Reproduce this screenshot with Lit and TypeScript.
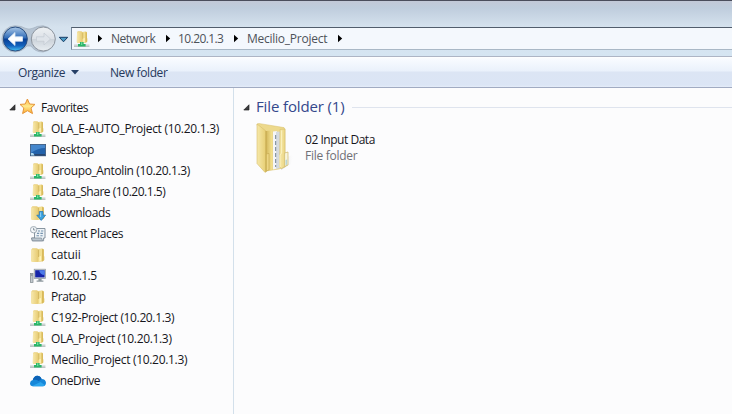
import { LitElement, html, svg, css } from "lit";
import { customElement, property } from "lit/decorators.js";
import { styleMap } from "lit/directives/style-map.js";

type Icon = "netfolder" | "desktop" | "downloads" | "recent" | "folder" | "computer" | "cloud";

const folderShape = svg`
  <path d="M1.4 2.4 L2.4 1.2 H7 L8 2 L12.6 1.4 L13.8 2.4 V9 L14.4 9.6 V13 L12.6 14.6 L2.2 15 L1.2 14 Z" fill="#e9d07f"/>
  <path d="M1.4 2.4 L8.4 2.2 V14.8 L2.2 15 L1.2 14 Z" fill="url(#gold)"/>
  <path d="M8.4 2.4 L12 1.8 V13.6 L8.4 14.8 Z" fill="#f3df90"/>
  <path d="M8.6 3 V10" stroke="#c9ac55" stroke-width=".8"/>
  <path d="M12 2 L13.8 2.6 V13.4 L12 14.4 Z" fill="#d8b95a"/>
  <path d="M9.4 9.5 L11 9 V13.6 L9.4 14.2 Z" fill="#fff3bb"/>`;

const art = {
  folder: folderShape,
  netfolder: svg`
    <g transform="translate(1.9 -.8) scale(.8 .86)">${folderShape}</g>
    <path d="M0 13.4 H15.4 V15.6 H0 Z" fill="#cfd6d6"/>
    <path d="M0 15.4 H15.4" stroke="#9aa7a4" stroke-width=".6"/>
    <path d="M6 11 H9.6 V13 H11.6 V15.6 H4 V13 H6 Z" fill="#2bb569"/>
    <path d="M7 11.2 H8.3 V14 H7 Z" fill="#6fdb98"/>`,
  desktop: svg`
    <rect x=".4" y="2.4" width="15.2" height="11.4" fill="#2362ab" stroke="#3b587c" stroke-width=".8"/>
    <path d="M1 3 H15 V6 Q8 6 1 11 Z" fill="#4586cc"/>
    <path d="M1 12.2 H15 V13.6 H1 Z" fill="#2b4365"/>
    <path d="M1 11 H3.2 L4.6 13.4 H1 Z" fill="#a9d5ef"/>`,
  downloads: svg`${folderShape}
    <path d="M9.4 6.5 H13 V10.2 H15.6 L11.2 15.4 L6.8 10.2 H9.4 Z" fill="#3ba2df" stroke="#2b7ab8" stroke-width=".8"/>
    <path d="M10.6 7.4 V12" stroke="#8ed1f4" fill="none"/>`,
  recent: svg`
    <path d="M4.5 2.5 H15 V12 H13.6 V14.8 H2.2 L1.8 12 H4.5 Z" fill="#edf2f6" stroke="#7c8995" stroke-width=".9"/>
    <path d="M1.4 12 H11.5 L12.6 14.8 H2.6 Z" fill="#bcc7d0" stroke="#7c8995" stroke-width=".7"/>
    <path d="M8 5 H10 M11 5 H13.3 M7 7.4 H9.2 M10.4 7.4 H12.9 M6.4 9.8 H9 M10.4 9.8 H12.6" stroke="#7592ad" stroke-width="1.1"/>
    <circle cx="3.6" cy="3.7" r="3.2" fill="#f4f7f9" stroke="#98a5af" stroke-width=".9"/>
    <path d="M3.6 1.8 V4 H5.3" stroke="#61707c" stroke-width=".7" fill="none"/>`,
  computer: svg`
    <rect x=".4" y="5.4" width="2.6" height="9" fill="#c4cbd0" stroke="#7d858b" stroke-width=".7"/>
    <path d="M1 7 H2.5" stroke="#515b65" stroke-width=".8"/>
    <rect x="4.2" y="1.2" width="11.4" height="9.4" fill="#d5dadd" stroke="#8c969d" stroke-width=".7"/>
    <rect x="5.2" y="2.2" width="9.4" height="7.2" fill="#1625a9"/>
    <path d="M9 2.2 H14.6 V7 Q10 7 9 2.2 Z" fill="#4d7be8"/>
    <path d="M8.4 10.8 H11.6 V12.4 H13.4 V13.8 H6.6 V12.4 H8.4 Z" fill="#8d989e"/>`,
  cloud: svg`
    <path d="M3 13.2 Q0 13 0 10.2 Q.2 7.6 2.8 7.1 Q3.8 3 7.3 2.8 Q10.2 2.8 11.6 5.9 Q15.7 6.2 16 9.7 Q15.8 13 13 13.2 Z" fill="#1687d9"/>
    <path d="M2.8 7.1 Q3.8 3 7.3 2.8 Q10.2 2.8 11.6 5.9 L8.8 8 Q6 6.2 2.8 7.1Z" fill="#0c62b6"/>
    <path d="M2 12.9 L10.6 9 L15 12.2 Q14 13.2 13 13.2 H3 Z" fill="#2ba5ed"/>`,
};

const places: { icon: Icon; label: string; tracking: number }[] = [
  { icon: "netfolder", label: "OLA_E-AUTO_Project (10.20.1.3)", tracking: -0.28 },
  { icon: "desktop", label: "Desktop", tracking: -0.5 },
  { icon: "netfolder", label: "Groupo_Antolin (10.20.1.3)", tracking: -0.38 },
  { icon: "netfolder", label: "Data_Share (10.20.1.5)", tracking: -0.47 },
  { icon: "downloads", label: "Downloads", tracking: -0.36 },
  { icon: "recent", label: "Recent Places", tracking: -0.33 },
  { icon: "folder", label: "catuii", tracking: -0.08 },
  { icon: "computer", label: "10.20.1.5", tracking: -0.57 },
  { icon: "folder", label: "Pratap", tracking: -0.42 },
  { icon: "netfolder", label: "C192-Project (10.20.1.3)", tracking: -0.37 },
  { icon: "netfolder", label: "OLA_Project (10.20.1.3)", tracking: -0.34 },
  { icon: "netfolder", label: "Mecilio_Project (10.20.1.3)", tracking: -0.32 },
  { icon: "cloud", label: "OneDrive", tracking: -0.48 },
];

@customElement("place-icon")
class PlaceIcon extends LitElement {
  static styles = css`
    :host { display: block; width: 16px; height: 16px; flex: none; }
    svg { display: block; }
  `;
  @property() name: Icon = "folder";
  render() {
    return html`<svg width="16" height="16" viewBox="0 0 16 16">
      <defs><linearGradient id="gold"><stop stop-color="#f7e8ac"/><stop offset="1" stop-color="#e6ca70"/></linearGradient></defs>
      ${art[this.name]}</svg>`;
  }
}

@customElement("app-root")
class AppRoot extends LitElement {
  static styles = css`
    :host {
      display: flex; flex-direction: column; width: 732px; height: 414px; overflow: hidden;
      background: #fcfcfd; color: #16161c; white-space: nowrap;
      font: 12px/21px "Open Sans", "Noto Sans", sans-serif; letter-spacing: -0.4px;
    }
    * { box-sizing: border-box; }
    svg { display: block; flex: none; }
    .frame {
      height: 56px; flex: none; display: flex; align-items: flex-start; padding-top: 25px;
      border-top: 1px solid #4b4e5c;
      background: linear-gradient(#c2c9d7, #bfcddd 7px, #d5e2ee 26px, #d5e5f2);
    }
    .nav { margin-top: -1px; }
    .address {
      flex: 1; height: 23px; margin-top: 1px; display: flex; align-items: center; padding-left: 2px;
      background: #f4f8fd; color: #4d5259;
      border: solid #a9b8c6; border-top-color: #515d6c; border-left-color: #77899c; border-width: 1px 0 1px 1px;
    }
    .crumb { flex: none; }
    .network { width: 45px; letter-spacing: -0.5px; }
    .host { width: 46px; letter-spacing: -0.58px; }
    .share { width: 81px; letter-spacing: -0.25px; }
    .tools {
      height: 32px; flex: none; display: flex; align-items: center; padding-left: 18px; color: #26395c;
      border-top: 1px solid #adb5c5; border-bottom: 1px solid #a1abc2;
      background: linear-gradient(#fff, #f8fbff 2px, #eaf1fb 14px, #dce5f4 15px, #dbe5f5 28px, #e5ecf8);
    }
    .caret { margin-left: 6px; }
    .new { margin-left: 31px; }
    .body { flex: 1; display: flex; min-height: 0; }
    .side { width: 234px; padding: 9px 0 0 9px; border-right: 1px solid #d3e0eb; }
    .fav { display: flex; align-items: center; height: 21px; }
    .star { margin: -2px 5px 0 3px; }
    .place { display: flex; align-items: center; height: 21px; padding-left: 21px; gap: 5px; }
    .main { flex: 1; padding: 8px 0 0 9px; }
    .group { display: flex; align-items: center; height: 22px; color: #34488c; font-size: 15px; letter-spacing: -0.13px; }
    .grouptitle { margin: -2px 0 0 6px; }
    .rule { flex: 1; height: 1px; margin-left: 7px; background: #dfe4ee; }
    .file { display: flex; padding: 5px 0 0 10px; }
    .meta { padding-top: 9px; margin-left: 10px; line-height: 16px; letter-spacing: -0.47px; }
    .kind { color: #707076; letter-spacing: -0.28px; }
  `;

  private sep(width: number, at: number) {
    return html`<svg width=${width} height="9" viewBox="0 0 ${width} 9"><path d="M${at} .8 L${at + 4.2} 4.5 L${at} 8.2 Z" fill="#000"/></svg>`;
  }

  private expander() {
    return html`<svg width="7" height="7"><path d="M6 .8 V6 H.8 Z" fill="#3b3b3e" stroke="#222" stroke-width=".7"/></svg>`;
  }

  render() {
    return html`
      <div class="frame">
        <svg class="nav" width="71" height="28" viewBox="0 0 71 28">
          <defs>
            <linearGradient id="blue" x2="0" y2="1"><stop stop-color="#a9c7e6"/><stop offset=".46" stop-color="#2f6bb8"/><stop offset=".5" stop-color="#083e94"/><stop offset=".78" stop-color="#1262bd"/><stop offset="1" stop-color="#49c5f5"/></linearGradient>
            <linearGradient id="grey" x2="0" y2="1"><stop stop-color="#eef1f4"/><stop offset=".48" stop-color="#dce1e7"/><stop offset=".52" stop-color="#ccd3da"/><stop offset="1" stop-color="#e9eef2"/></linearGradient>
          </defs>
          <path d="M15 .8 Q22 1 25 3.2 Q29 5 33 3.2 Q37 .8 43 .8 A13.2 13.2 0 0 1 43 27 Q35 27 31 21 H27 Q22 27 15 27 A13.1 13.1 0 0 1 15 .8Z" fill="#b6c4d3" stroke="#a3b0bf" stroke-width=".7"/>
          <circle cx="15.3" cy="14" r="12" fill="url(#blue)" stroke="#284d80"/>
          <path d="M8 14 L15 7.5 V11.8 H22.5 V16.2 H15 V20.5 Z" fill="#fff" stroke="#dce8f5" stroke-width=".8" stroke-linejoin="round"/>
          <circle cx="43.3" cy="14" r="12" fill="url(#grey)" stroke="#8b939d"/>
          <path d="M50.5 14 L44 8 V11.8 H36.5 V16.2 H44 V20 Z" fill="#dfe4ea" stroke="#c3cad2" stroke-width=".7" stroke-linejoin="round"/>
          <path d="M59.3 12.3 H67.7 L63.5 16.8 Z" fill="#4b9cc6" stroke="#183d65" stroke-linejoin="round"/>
        </svg>
        <div class="address">
          <place-icon name="netfolder"></place-icon>
          ${this.sep(21, 8)}<span class="crumb network">Network</span>
          ${this.sep(22, 10)}<span class="crumb host">10.20.1.3</span>
          ${this.sep(23, 10)}<span class="crumb share">Mecilio_Project</span>
          ${this.sep(20, 10)}
        </div>
      </div>
      <div class="tools">
        <span>Organize</span>
        <svg class="caret" width="8" height="5"><path d="M0 0 H8 L4 4.6Z" fill="#263f66"/></svg>
        <span class="new">New folder</span>
      </div>
      <div class="body">
        <div class="side">
          <div class="fav">
            ${this.expander()}
            <svg class="star" width="17" height="17" viewBox="0 0 17 17">
              <defs><linearGradient id="sun" x2="0" y2="1"><stop stop-color="#ffb848"/><stop offset=".5" stop-color="#ffe98c"/><stop offset="1" stop-color="#fba82d"/></linearGradient></defs>
              <path d="M8.4 1 L10.6 6 L16 6.4 L12 10 L13.5 15.6 L8.5 12.7 L3.6 15.6 L4.8 10 L1 6.4 L6.2 6 Z" fill="url(#sun)" stroke="#e6963a" stroke-width="1" stroke-linejoin="round"/>
            </svg>
            <span>Favorites</span>
          </div>
          ${places.map((p) => html`<div class="place">
            <place-icon name=${p.icon}></place-icon>
            <span style=${styleMap({ letterSpacing: `${p.tracking}px` })}>${p.label}</span>
          </div>`)}
        </div>
        <div class="main">
          <div class="group">${this.expander()}<span class="grouptitle">File folder (1)</span><span class="rule"></span></div>
          <div class="file">
            <svg width="42" height="52" viewBox="0 0 42 52">
              <defs>
                <linearGradient id="front"><stop stop-color="#f6e8a9"/><stop offset="1" stop-color="#e7ce73"/></linearGradient>
                <linearGradient id="leaf"><stop stop-color="#d3b75b"/><stop offset="1" stop-color="#f3e190"/></linearGradient>
                <linearGradient id="shade"><stop stop-color="#a2a2a2" stop-opacity=".5"/><stop offset="1" stop-color="#fff" stop-opacity="0"/></linearGradient>
              </defs>
              <path d="M30 36 L41 31 L38 41 L28 47 Z" fill="url(#shade)"/>
              <path d="M4 1 L5.5 .4 L31 4.6 L32 6 V44 L26 46 L13 48 Z" fill="#edd98c" stroke="#d8c06d" stroke-width=".5"/>
              <path d="M13 8 L19 7.4 V46.5 L13 48 Z" fill="url(#leaf)"/>
              <path d="M20 8.6 L24 8 V45.6 L20 46.4 Z" fill="#f5f6f7"/>
              <path d="M23 8.8 L27 8.4 V45 L23 46 Z" fill="#d5dadf"/>
              <path d="M22.6 12 V44" stroke="#8997a4" stroke-width="1.2" stroke-dasharray="4 2"/>
              <path d="M27 6.4 L32 6 V30 L34.5 31 V42 L28.5 45.5 L26.5 44 Z" fill="url(#front)" stroke="#d1b965" stroke-width=".5"/>
              <path d="M28.6 7.5 V30 L27 32 V44" stroke="#fbf2bf" fill="none"/>
              <path d="M31.6 30 L35 29 V42 L31.6 43.5 Z" fill="#f7f4dc" stroke="#cfb768" stroke-width=".7"/>
              <path d="M32.6 37 L34.2 36.4 V41.6 L32.6 42.4Z" fill="#b8d4d4"/>
              <path d="M4 1 L13 8 V48.8 L12 49.4 L4 40.5 Z" fill="url(#front)" stroke="#d6be6c" stroke-width=".6"/>
              <path d="M13 8 V49" stroke="#c3a64b" stroke-width=".9"/>
              <path d="M13.4 31 L16 30.4 V46.8 L13.4 48 Z" fill="#edd684" stroke="#c6aa50" stroke-width=".6"/>
            </svg>
            <div class="meta"><div>02 Input Data</div><div class="kind">File folder</div></div>
          </div>
        </div>
      </div>`;
  }
}
